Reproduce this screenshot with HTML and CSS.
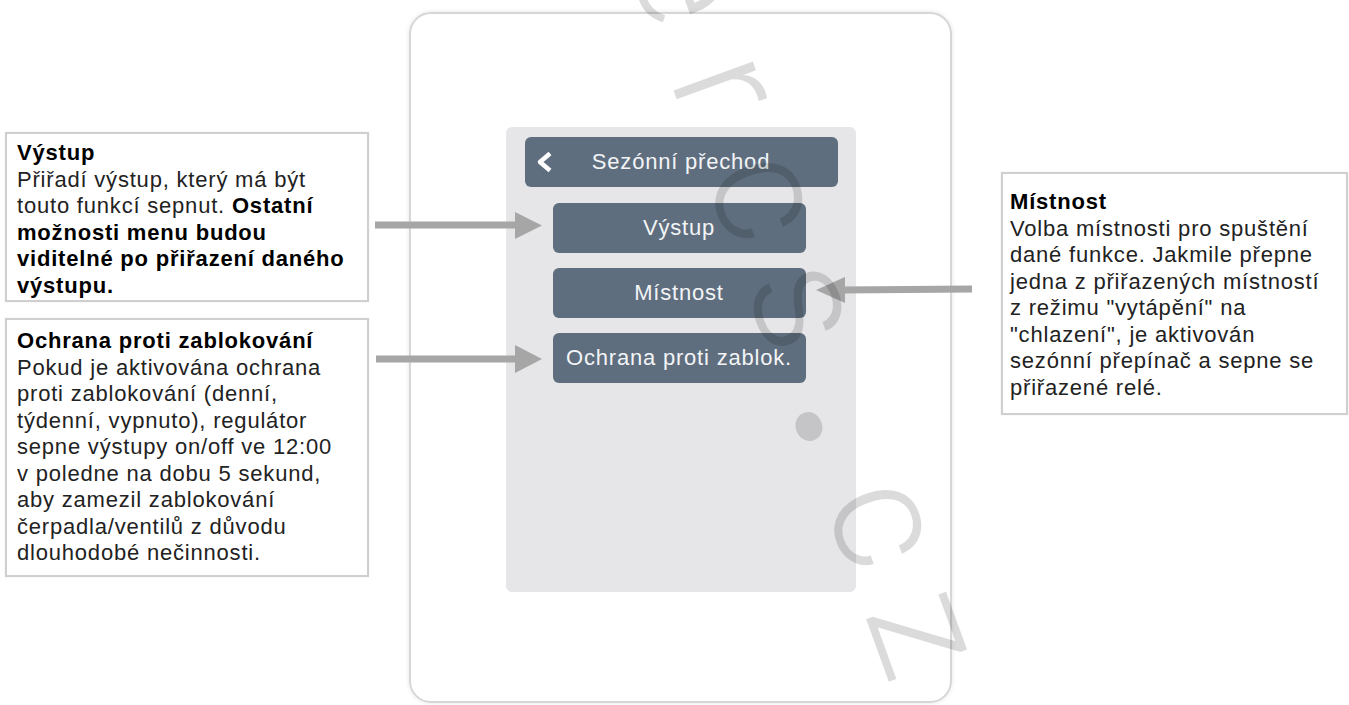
FILE: index.html
```html
<!DOCTYPE html>
<html lang="cs">
<head>
  <meta charset="UTF-8" />
  <meta name="viewport" content="width=device-width, initial-scale=1.0"/>
  <title>Sezónní přechod</title>
  <link rel="stylesheet" href="styles.css">
</head>
<body>
  <div class="page">
    <div class="notes-left">
      <div class="note note-out">
        <b>Výstup</b><br>
        Přiřadí výstup, který má být<br>
        touto funkcí sepnut. <b>Ostatní</b><br>
        <b>možnosti menu budou</b><br>
        <b>viditelné po přiřazení daného</b><br>
        <b>výstupu.</b>
      </div>
      <div class="note note-lock">
        <b>Ochrana proti zablokování</b><br>
        Pokud je aktivována ochrana<br>
        proti zablokování (denní,<br>
        týdenní, vypnuto), regulátor<br>
        sepne výstupy on/off ve 12:00<br>
        v poledne na dobu 5 sekund,<br>
        aby zamezil zablokování<br>
        čerpadla/ventilů z důvodu<br>
        dlouhodobé nečinnosti.
      </div>
    </div>

    <div class="device">
      <div class="screen">
        <div class="screen-head">
          <span class="back">
            <svg width="20" height="22" viewBox="0 0 20 22"><polyline points="15,2.5 5,11 15,19.5" fill="none" stroke="#fff" stroke-width="4.5" stroke-linejoin="round"/></svg>
          </span>
          <span class="head-title">Sezónní přechod</span>
          <span></span>
        </div>
        <div class="screen-menu">
          <div class="menu-btn">Výstup</div>
          <div class="menu-btn">Místnost</div>
          <div class="menu-btn">Ochrana proti zablok.</div>
        </div>
      </div>
    </div>

    <div class="notes-right">
      <div class="note note-room">
        <b>Místnost</b><br>
        Volba místnosti pro spuštění<br>
        dané funkce. Jakmile přepne<br>
        jedna z přiřazených místností<br>
        z režimu "vytápění" na<br>
        "chlazení", je aktivován<br>
        sezónní přepínač a sepne se<br>
        přiřazené relé.
      </div>
    </div>
  </div>

  <!-- callout arrows -->
  <svg class="arrows" width="1349" height="705" viewBox="0 0 1349 705">
    <g fill="#a6a6a6" stroke="#a6a6a6">
      <line x1="375" y1="225" x2="518" y2="225" stroke-width="7"/>
      <polygon points="515,212 542,225.5 515,239" stroke="none"/>
      <line x1="376" y1="359" x2="518" y2="359" stroke-width="7"/>
      <polygon points="515,345 542,359 515,373" stroke="none"/>
      <line x1="972" y1="289" x2="842" y2="290" stroke-width="7"/>
      <polygon points="845,277 816,290 845,303" stroke="none"/>
    </g>
  </svg>

  <div class="watermark" aria-hidden="true"><span>e</span><span>r</span><span>c</span><span>s</span><span class="dot">.</span><span>c</span><span>z</span></div>
</body>
</html>
```

FILE: styles.css
```css
body {
  margin: 0;
  height: 705px;
  overflow: hidden;
  position: relative;
  background: #fff;
  font-family: "Liberation Sans", Arial, sans-serif;
}
.page {
  display: flex;
  align-items: flex-start;
  padding-left: 5px;
}
.notes-left {
  width: 364px;
  margin-top: 132px;
  display: flex;
  flex-direction: column;
  gap: 16px;
}
.notes-right {
  width: 347px;
  margin: 172px 0 0 49px;
}
.note {
  box-sizing: border-box;
  border: 2px solid #cfcfcf;
  box-shadow: 0 0 1px rgba(0, 0, 0, 0.15);
  background: #fff;
  color: #222;
  font-size: 22px;
  letter-spacing: 0.8px;
  line-height: 26.5px;
  white-space: nowrap;
}
.note b {
  color: #000;
}
.note-out {
  padding: 6px 10px 1px;
}
.note-lock {
  padding: 8px 10px;
}
.note-room {
  padding: 15px 7px 12px;
}
.device {
  box-sizing: border-box;
  width: 543px;
  height: 691px;
  margin: 12px 0 0 40px;
  border: 2px solid #d6d6d6;
  border-radius: 22px;
  box-shadow: 0 0 5px rgba(0, 0, 0, 0.1);
}
.screen {
  box-sizing: border-box;
  width: 350px;
  height: 465px;
  margin: 113px auto 0;
  padding-top: 10px;
  background: #e6e6e8;
  border-radius: 6px;
}
.screen-head {
  display: grid;
  grid-template-columns: 40px 1fr 40px;
  align-items: center;
  height: 50px;
  margin: 0 18px 0 19px;
  background: #5f6e7e;
  border-radius: 6px;
  color: #f2f4f6;
  font-size: 22px;
  letter-spacing: 0.8px;
}
.back {
  display: flex;
  padding-left: 10px;
}
.head-title {
  text-align: center;
}
.screen-menu {
  display: flex;
  flex-direction: column;
  gap: 15px;
  width: 253px;
  margin: 16px 0 0 47px;
}
.menu-btn {
  height: 50px;
  display: flex;
  align-items: center;
  justify-content: center;
  background: #5f6e7e;
  border-radius: 6px;
  color: #f2f4f6;
  font-size: 22px;
  letter-spacing: 0.8px;
}
.arrows {
  position: absolute;
  top: 0;
  left: 0;
  pointer-events: none;
}
.watermark {
  position: absolute;
  left: 745px;
  top: -105px;
  display: flex;
  transform-origin: 0 0;
  transform: rotate(70deg);
  font-family: Roboto, "DejaVu Sans", sans-serif;
  font-weight: 300;
  font-size: 160px;
  line-height: 160px;
  color: rgba(0, 0, 0, 0.14);
  pointer-events: none;
}
.watermark span {
  width: 116px;
  text-align: center;
}
.watermark .dot {
  font-weight: 900;
}
```
